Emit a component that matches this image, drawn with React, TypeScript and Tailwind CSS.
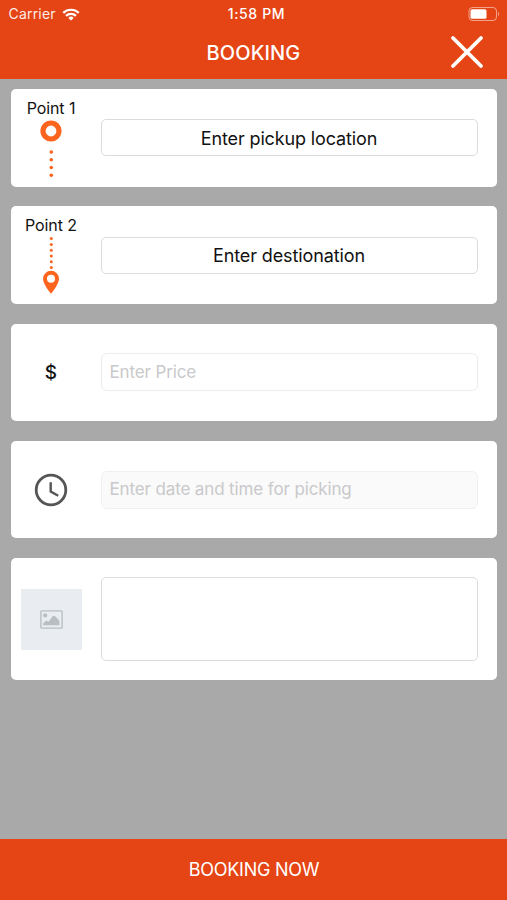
import type { ReactNode } from 'react';

function StatusBar() {
  return (
    <div className="relative flex h-7 items-center justify-between pl-[8.5px] pr-[7px] text-white">
      <div className="flex items-center gap-[6px]">
        <span className="text-[14px] leading-7 tracking-[0.19px] opacity-90">Carrier</span>
        <svg width="18" height="13" viewBox="0 0 18 13" fill="none" stroke="currentColor" strokeWidth="2.2">
          <path d="M1.2 4.9a11.2 11.2 0 0 1 15.6 0" />
          <path d="M4 7.9a7.1 7.1 0 0 1 10 0" />
          <path d="M9 12.6 6.3 9.9a3.9 3.9 0 0 1 5.4 0Z" fill="currentColor" stroke="none" />
        </svg>
      </div>
      <span className="absolute left-1/2 top-0 ml-[3px] -translate-x-1/2 whitespace-nowrap text-[14px] font-medium leading-7 tracking-[0.65px]">
        1:58 PM
      </span>
      <svg width="32" height="14" viewBox="0 0 32 14" fill="none">
        <rect x="1" y="0.5" width="27.5" height="13" rx="3.5" stroke="white" strokeOpacity="0.5" />
        <rect x="2.5" y="2.2" width="16" height="9.6" rx="1.6" fill="white" />
        <path d="M30 5v4c1.6-.6 1.6-3.4 0-4Z" fill="white" fillOpacity="0.5" />
      </svg>
    </div>
  );
}

function Header() {
  return (
    <header className="h-[79px] bg-[#e54414] text-white">
      <StatusBar />
      <div className="relative flex h-[49px] items-center justify-center">
        <h1 className="text-[20px] font-medium leading-6 tracking-[0.1px]">BOOKING</h1>
        <button className="absolute right-[23px] top-[7px]" aria-label="Close">
          <svg width="34" height="34" viewBox="0 0 34 34" stroke="currentColor" strokeWidth="3.8" strokeLinecap="round">
            <path d="M3 3 31 31M31 3 3 31" />
          </svg>
        </button>
      </div>
    </header>
  );
}

function PickupIcon() {
  return (
    <svg className="mt-px" width="24" height="60" viewBox="0 0 24 60" fill="none">
      <circle cx="12" cy="12" r="8" stroke="#fd651f" strokeWidth="5.2" />
      {[33, 40.7, 48.5, 56.3].map((cy) => (
        <circle key={cy} cx="12.3" cy={cy} r="1.8" fill="#fd651f" />
      ))}
    </svg>
  );
}

function DestinationIcon() {
  return (
    <svg className="mt-px" width="24" height="60" viewBox="0 0 24 60" fill="#fd651f">
      {[2.6, 8.4, 14.2, 20, 25.8, 31.6].map((cy) => (
        <circle key={cy} cx="12.3" cy={cy} r="1.5" />
      ))}
      <path
        fillRule="evenodd"
        d="M12 34.8a8 8 0 0 0-8 8C4 48.7 12 57.8 12 57.8s8-9.1 8-15a8 8 0 0 0-8-8Zm0 4a4 4 0 1 1 0 8 4 4 0 0 1 0-8Z"
      />
    </svg>
  );
}

function ClockIcon() {
  return (
    <svg width="34" height="34" viewBox="0 0 34 34" fill="none" stroke="#555555">
      <circle cx="17" cy="17" r="14.8" strokeWidth="2.8" />
      <path d="M16.7 9.2v9.3l7.5 4.2" strokeWidth="2.4" />
    </svg>
  );
}

function ImagePlaceholder() {
  return (
    <div className="flex size-[61px] items-center justify-center bg-[#e9edf1]">
      <svg width="23" height="19" viewBox="0 0 23 19" fill="#b9bec1">
        <rect x="0.9" y="0.9" width="21.2" height="17.2" rx="0.8" fill="none" stroke="#b9bec1" strokeWidth="1.4" />
        <circle cx="5.2" cy="5.4" r="2.1" />
        <path d="M3.2 15.2v-1.8l3.1-2.8 2.2 1.2 4.6-6.1 2.4.8 3.9 4.3v4.4Z" />
      </svg>
    </div>
  );
}

function Card({ icon, label, tall, children }: { icon: ReactNode; label?: string; tall?: boolean; children: ReactNode }) {
  return (
    <section className={`flex rounded-[5px] bg-white pr-[19.5px] ${tall ? 'h-[122px]' : 'h-[97.6px]'}`}>
      <div className={`flex w-[90px] flex-col items-center pr-[9px] ${label ? 'pt-[9px]' : 'justify-center'}`}>
        {label && <span className="whitespace-nowrap text-[16px] leading-5 tracking-[-0.1px]">{label}</span>}
        {icon}
      </div>
      <div className="flex flex-1 items-center">{children}</div>
    </section>
  );
}

function App() {
  return (
    <div className="flex h-[900px] w-full flex-col overflow-hidden bg-[#a9a9a9] font-['Inter',sans-serif] text-[#111111]">
      <Header />
      <main className="flex flex-1 flex-col gap-[19.7px] pl-[10.5px] pr-[10px] pt-[10px]">
        <Card label="Point 1" icon={<PickupIcon />}>
          <button className="h-[37px] w-full rounded-[5px] border border-[#dcdcdc] pt-px text-[18px] tracking-[-0.13px]">
            Enter pickup location
          </button>
        </Card>
        <Card label="Point 2" icon={<DestinationIcon />}>
          <button className="h-[37px] w-full rounded-[5px] border border-[#dcdcdc] pt-px text-[18px] tracking-[-0.1px]">
            Enter destionation
          </button>
        </Card>
        <Card icon={<span className="pt-px text-[19px] font-medium leading-6">$</span>}>
          <div className="flex h-[38px] w-full items-center rounded-[6px] border border-[#ececec] px-2 pt-px text-[17px] tracking-[-0.13px] text-[#c9c9cb]">
            Enter Price
          </div>
        </Card>
        <Card icon={<ClockIcon />}>
          <div className="flex h-[38px] w-full items-center rounded-[6px] border border-[#f0f0f0] bg-[#fafafa] px-2 pt-px text-[17px] tracking-[-0.13px] text-[#c9c9cb]">
            Enter date and time for picking
          </div>
        </Card>
        <Card tall icon={<ImagePlaceholder />}>
          <div className="h-[84px] w-full rounded-[5px] border border-[#dcdcdc]" />
        </Card>
      </main>
      <button className="h-[61px] w-full bg-[#e54414] pl-px text-[18px] tracking-[-0.25px] text-white">BOOKING NOW</button>
    </div>
  );
}

export default App;
